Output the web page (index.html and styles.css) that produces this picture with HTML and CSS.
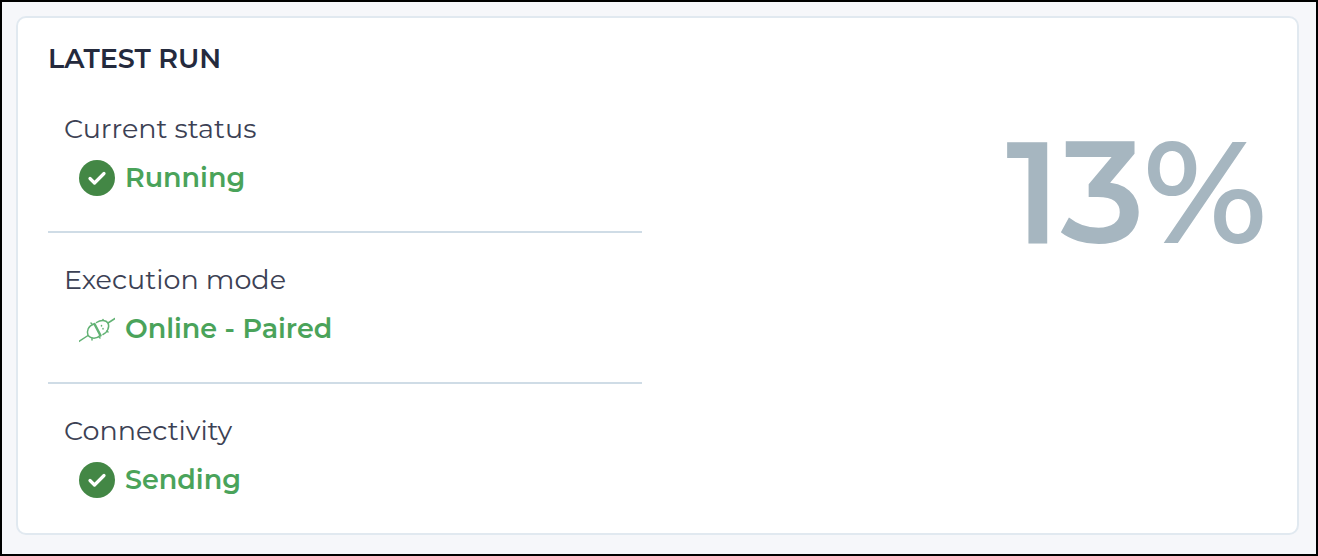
FILE: index.html
```html
<!DOCTYPE html>
<html lang="en">
<head>
<meta charset="utf-8">
<title>Latest run</title>
<link rel="stylesheet" href="styles.css">
</head>
<body>
<svg class="sprite" aria-hidden="true">
  <symbol id="check" viewBox="0 0 36 36">
    <circle cx="18" cy="18" r="18" fill="#438745"/>
    <path d="M11 18.500l4.500 4.500L25 13.500" fill="none" stroke="#fff" stroke-width="3.200" stroke-linecap="round" stroke-linejoin="round"/>
  </symbol>
</svg>
<main class="page">
  <section class="card">
    <h1 class="card-title">LATEST RUN</h1>
    <div class="card-body">
      <dl class="status-list">
        <div class="status-item">
          <dt class="status-label">Current status</dt>
          <dd class="status-value">
            <svg class="status-icon" aria-hidden="true"><use href="#check"/></svg>
            <span>Running</span>
          </dd>
        </div>
        <div class="status-item">
          <dt class="status-label">Execution mode</dt>
          <dd class="status-value">
            <svg class="status-icon" viewBox="0 0 36 36" fill="none" stroke="#62b274" stroke-width="1.500" stroke-linecap="round" aria-hidden="true">
              <path d="M0 30.500L9 24.500M29 12L36 7.500"/>
              <path d="M15 13C9 15 7.500 20 9 24.500C12 28 18 28 21 24.500"/>
              <path d="M17.500 11.500C22 8.500 27 9 29 12C31 16 28 22 24 23.500"/>
              <path d="M15.500 13L21.500 24.500" stroke-width="2.500"/>
              <path d="M13 13L12 12M20 26L21 27M13 27.500V29M24 9.500V8.500M28 20L29 21M22.500 14.500V15M24 17.500V18"/>
            </svg>
            <span>Online - Paired</span>
          </dd>
        </div>
        <div class="status-item">
          <dt class="status-label">Connectivity</dt>
          <dd class="status-value">
            <svg class="status-icon" aria-hidden="true"><use href="#check"/></svg>
            <span>Sending</span>
          </dd>
        </div>
      </dl>
      <p class="progress">13%</p>
    </div>
  </section>
</main>
</body>
</html>
```
FILE: styles.css
```css
* {
  box-sizing: border-box;
}

body {
  margin: 0;
  font-family: Montserrat, Inter, "Liberation Sans", sans-serif;
  color: #242a3d;
}

.sprite {
  display: none;
}

.page {
  display: flex;
  min-height: 100vh;
  padding: 14px 17px 19px 14px;
  border: 2px solid #000;
  background: #f6f7fa;
}

.card {
  flex: 1;
  padding: 25px 30px 16px;
  border: 2px solid #e1e9f0;
  border-radius: 10px;
  background: #fff;
}

.card-title {
  margin: 0;
  font-size: 27px;
  font-weight: 600;
  line-height: 32px;
}

.card-body {
  display: grid;
  grid-template-columns: 1fr 1fr;
  gap: 32px;
}

.status-list {
  margin: 0;
}

.status-item {
  padding: 29px 16px 35px;
  border-bottom: 2px solid #cfdce6;
}

.status-item:last-child {
  padding-bottom: 0;
  border-bottom: 0;
}

.status-item:first-child {
  padding-top: 36px;
}

.status-label {
  font-size: 27px;
  line-height: 36px;
  color: #3c4154;
}

.status-value {
  display: flex;
  align-items: center;
  gap: 10px;
  margin: 13px 0 0 15px;
  font-size: 27px;
  font-weight: 600;
  line-height: 36px;
  color: #4aa35a;
}

.status-icon {
  flex: none;
  width: 36px;
  height: 36px;
}

.progress {
  margin: 32px 0 0;
  font-size: 144px;
  font-weight: 600;
  line-height: 170px;
  text-align: right;
  color: #a6b6c0;
}
```
